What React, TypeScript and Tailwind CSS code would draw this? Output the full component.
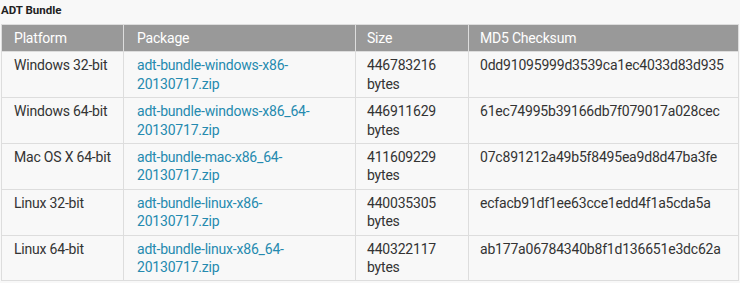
import React from "react";

const rows = [
  ["Windows 32-bit", "adt-bundle-windows-x86-", "446783216", "0dd91095999d3539ca1ec4033d83d935"],
  ["Windows 64-bit", "adt-bundle-windows-x86_64-", "446911629", "61ec74995b39166db7f079017a028cec"],
  ["Mac OS X 64-bit", "adt-bundle-mac-x86_64-", "411609229", "07c891212a49b5f8495ea9d8d47ba3fe"],
  ["Linux 32-bit", "adt-bundle-linux-x86-", "440035305", "ecfacb91df1ee63cce1edd4f1a5cda5a"],
  ["Linux 64-bit", "adt-bundle-linux-x86_64-", "440322117", "ab177a06784340b8f1d136651e3dc62a"],
];

export default function App() {
  return (
    <div className="w-[740px] h-[283px] bg-[#f8f8f8] pl-px font-['Roboto',sans-serif] text-[14px] leading-[18.4px] tracking-[-0.2px] text-[#333]">
      <div className="h-[24px] pt-[3px] text-[11.5px] font-bold text-[#222] leading-[14px] tracking-normal">ADT Bundle</div>
      <table className="border-collapse w-[737px] table-fixed">
        <colgroup>
          <col className="w-[122px]" />
          <col className="w-[232px]" />
          <col className="w-[113px]" />
          <col className="w-[270px]" />
        </colgroup>
        <thead>
          <tr className="bg-[#999] text-white">
            <th className="border border-[#ddd] px-[12px] py-[4px] text-left font-normal">Platform</th>
            <th className="border border-[#ddd] px-[13px] py-[4px] text-left font-normal">Package</th>
            <th className="border border-[#ddd] px-[11px] py-[4px] text-left font-normal">Size</th>
            <th className="border border-[#ddd] px-[11px] py-[4px] text-left font-normal">MD5 Checksum</th>
          </tr>
        </thead>
        <tbody>
          {rows.map((r) => (
            <tr key={r[0]}>
              <td className="border border-[#ddd] px-[12px] py-[4px] align-top whitespace-nowrap">{r[0]}</td>
              <td className="border border-[#ddd] px-[13px] py-[4px] align-top">
                <a className="text-[#258aaf]">
                  {r[1]}
                  <br />
                  20130717.zip
                </a>
              </td>
              <td className="border border-[#ddd] px-[11px] py-[4px] align-top">
                {r[2]}
                <br />
                bytes
              </td>
              <td className="border border-[#ddd] px-[11px] py-[4px] align-top">{r[3]}</td>
            </tr>
          ))}
        </tbody>
      </table>
    </div>
  );
}
